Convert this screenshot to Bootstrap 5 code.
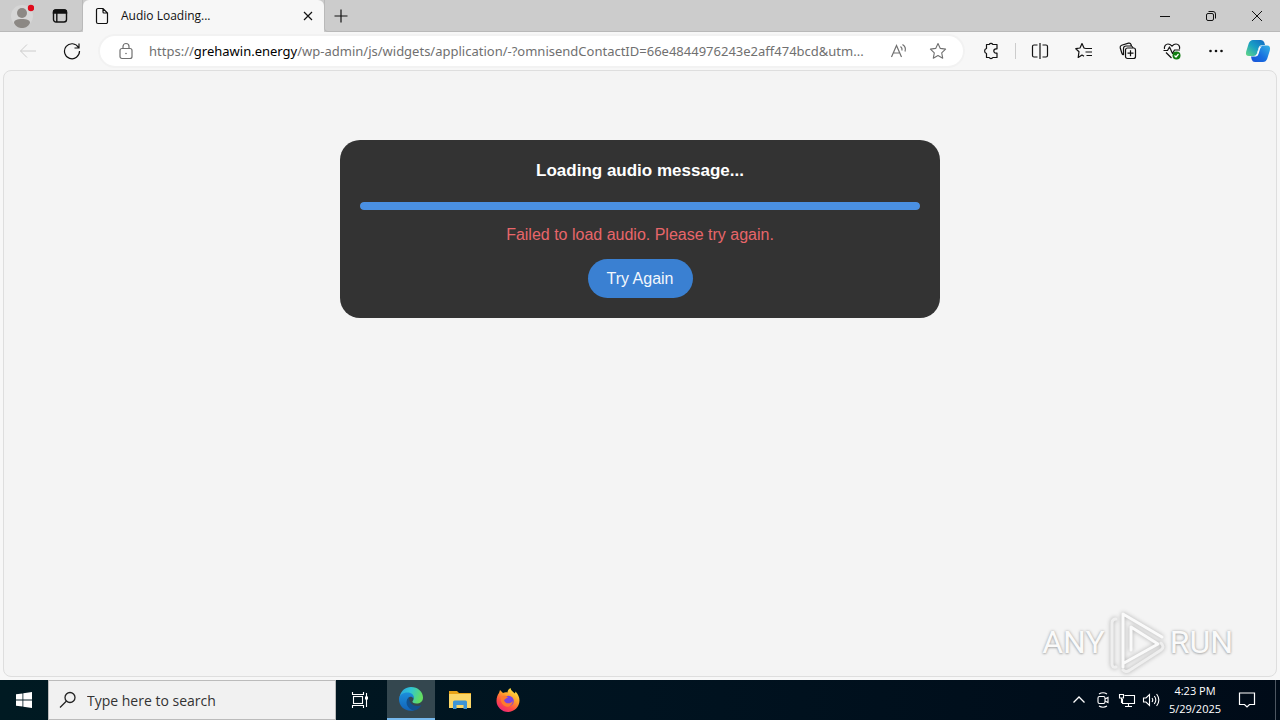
<!DOCTYPE html>
<html lang="en">
<head>
<meta charset="utf-8">
<meta name="viewport" content="width=device-width, initial-scale=1">
<title>Audio Loading...</title>
<link href="https://cdn.jsdelivr.net/npm/bootstrap@5.3.0/dist/css/bootstrap.min.css" rel="stylesheet">
<style>
  body { font-family: "Open Sans", "Noto Sans", sans-serif; font-size: 12px; background: #f7f7f7; color: #111; }
  svg { display: block; fill: none; stroke: currentColor; flex: none; }
  svg.solid { stroke: none; }
  .plain { border: 0; background: transparent; color: inherit; padding: 0; display: flex; align-items: center; justify-content: center; flex: none; }
  .titlebar { height: 32px; background: #ccc; }
  .leading { width: 83px; border-right: 1px solid #b9b9b9; border-bottom: 1px solid #b9b9b9; border-bottom-right-radius: 4px; padding-left: 3px; }
  .w-38 { width: 38px; }
  .browser-tab { width: 241px; background: #f7f7f7; border-radius: 6px 6px 0 0; padding: 0 8px 0 12px; }
  .tab-tail { border-left: 1px solid #b9b9b9; border-bottom: 1px solid #b9b9b9; border-bottom-left-radius: 4px; }
  .w-34 { width: 32px; }
  .w-46 { width: 46px; }
  .toolbar { height: 38px; padding: 0 2px 0 6px; }
  .tool { width: 44px; height: 32px; }
  .omnibox { height: 30px; background: #fff; border-radius: 15px; margin: 0 6px; padding-left: 18px; padding-right: 6px; box-shadow: 0 0 0 2px #f2f2f2; color: #707070; font-family: "Noto Sans", sans-serif; font-size: 13px; }
  .omnibox b { font-weight: 400; color: #000; }
  .address { margin-left: 15px; padding-top: 1px; white-space: nowrap; outline: 0; }
  .omni-btn { width: 39px; height: 28px; }
  .divider { width: 1px; height: 16px; background: #ccc; margin: 0 2px; }
  .site { margin: 0 3px 3px; background: #f4f4f4; border: 1px solid #dedede; border-radius: 8px; padding: 69px 16px 16px; }
  .player { max-width: 600px; background: #333; border-radius: 20px; padding: 20px; font-family: "Liberation Sans", Arial, sans-serif; font-size: 16px; line-height: 18px; }
  .player h1 { font-size: 17px; line-height: 22px; font-weight: 700; color: #fff; margin: 0 0 20px; }
  .player .progress { height: 8px; border-radius: 4px; background: #555; margin-bottom: 16px; }
  .player .progress-bar { background: #4a90e2; border-radius: 4px; }
  .player p { color: #e8666a; margin: 0 0 15px; }
  .retry { background: #3a80d2; color: #f2f7fc; border: 0; border-radius: 20px; padding: 10px 19px; height: 39px; font-size: 16px; line-height: 19px; }
  .watermark { right: 43px; bottom: 2px; font-family: Roboto, "Liberation Sans", sans-serif; font-size: 32px; line-height: 64px; color: #fafafa; text-shadow: 0 0 3px #a8a8a8, 0 1px 2px #bdbdbd; pointer-events: none; }
  .watermark svg { filter: drop-shadow(0 0 2px #aaa); margin: 0 4px 0 3px; }
  .taskbar { height: 40px; background: linear-gradient(90deg, #001a22, #001320 50%, #000b18); color: #fff; }
  .w-48 { width: 48px; }
  .search { width: 288px; background: #f1f1f1; border: 1px solid #bbb; color: #222; padding-left: 10px; gap: 10px; }
  .search input { border: 0; background: transparent; outline: 0; padding: 0; min-width: 0; font-size: 14px; color: #333; }
  .search input::placeholder { color: #333; opacity: 1; }
  .running { background: #34474f; border-bottom: 2px solid #76b9ed; margin: 0 1px 0 3px; }
  .w-24 { width: 24px; }
  .clock { width: 64px; font-size: 11px; line-height: 18px; }
  .w-40 { width: 40px; }
  .peek { width: 5px; border-left: 1px solid #4d5661; margin-left: 8px; }
</style>
</head>
<body class="vh-100 d-flex flex-column overflow-hidden">
<header>
  <div class="titlebar d-flex">
    <div class="leading d-flex">
      <button class="plain w-38" aria-label="Profile"><svg class="solid" width="24" height="26" viewBox="0 0 24 26"><circle cx="12" cy="13" r="11" fill="#d6d6d6"/><circle cx="12" cy="10" r="5" fill="#8c8884"/><path d="M4 20c0-3 3-4 8-4s8 1 8 4c-2 4-5 5-8 5s-6-1-8-5z" fill="#8c8884"/><circle cx="21" cy="5" r="3.2" fill="#e00b1c"/></svg></button>
      <button class="plain w-38" aria-label="Tab actions"><svg width="16" height="16" viewBox="0 0 16 16" stroke-width="1.4"><rect x="1.5" y="2" width="13" height="12" rx="2.5"/><path d="M1.5 5V4a2 2 0 0 1 2-2h9a2 2 0 0 1 2 2v1z" fill="currentColor"/><path d="M4.8 5v9"/></svg></button>
    </div>
    <div class="browser-tab d-flex align-items-center">
      <svg width="14" height="18" viewBox="0 0 14 18" stroke-width="1.2"><path d="M3 1.5h5L12.500 6v9a1.500 1.500 0 0 1-1.500 1.500H3A1.500 1.500 0 0 1 1.500 15V3A1.500 1.500 0 0 1 3 1.500zM8 1.500V5a1 1 0 0 0 1 1h3.500"/></svg>
      <span class="flex-grow-1 ms-2 ps-1">Audio Loading...</span>
      <button class="plain" aria-label="Close tab"><svg width="16" height="16" viewBox="0 0 16 16" stroke-width="1.200"><path d="M4 4l8 8M12 4l-8 8"/></svg></button>
    </div>
    <div class="tab-tail d-flex flex-grow-1 justify-content-between">
      <button class="plain w-34" aria-label="New tab"><svg width="16" height="16" viewBox="0 0 16 16" stroke-width="1.200"><path d="M8 1.500v13M1.500 8h13"/></svg></button>
      <div class="d-flex">
        <button class="plain w-46" aria-label="Minimize"><svg width="12" height="12" viewBox="0 0 12 12"><path d="M1 6.500h10"/></svg></button>
        <button class="plain w-46" aria-label="Restore"><svg width="12" height="12" viewBox="0 0 12 12"><rect x="1.500" y="3.500" width="7" height="7" rx="1.500"/><path d="M3.500 1.500H8A2.500 2.500 0 0 1 10.500 4v4.500"/></svg></button>
        <button class="plain w-46" aria-label="Close"><svg width="12" height="12" viewBox="0 0 12 12"><path d="M1 1l10 10M11 1L1 11"/></svg></button>
      </div>
    </div>
  </div>
  <nav class="toolbar d-flex align-items-center">
    <button class="plain tool" aria-label="Back"><svg width="18" height="16" viewBox="0 0 18 16" style="color:#ccc"><path d="M17 8H1.500M8 1.500L1.500 8 8 14.500"/></svg></button>
    <button class="plain tool" aria-label="Refresh"><svg width="18" height="18" viewBox="0 0 18 18" stroke-width="1.200"><path d="M15.500 5.500A7.500 7.500 0 1 0 16.500 9M16 1.500V6h-4.500"/></svg></button>
    <div class="omnibox d-flex align-items-center flex-grow-1 overflow-hidden">
      <svg width="16" height="18" viewBox="0 0 16 18" stroke-width="1.200"><rect x="2" y="6.500" width="12" height="10" rx="2"/><path d="M5 6.500V4.500a3 3 0 0 1 6 0v2"/><circle cx="8" cy="11.500" r=".8" fill="currentColor" stroke="none"/></svg>
      <div class="address flex-grow-1" role="textbox" contenteditable="true" aria-label="Address and search bar" spellcheck="false">https://<b>grehawin.energy</b>/wp-admin/js/widgets/application/-?omnisendContactID=66e4844976243e2aff474bcd&amp;utm...</div>
      <button class="plain omni-btn" aria-label="Read aloud"><svg width="18" height="16" viewBox="0 0 18 16" stroke-width="1.200"><path d="M1.500 14L6.500 2.500 11.500 14M3.500 10h6M10.500 3.500q2 1.500 1.500 4M12.500 1.500q4 2.500 2.500 7"/></svg></button>
      <button class="plain omni-btn" aria-label="Add to favorites"><svg width="18" height="18" viewBox="0 0 18 18" stroke-width="1.100" stroke-linejoin="round"><path d="M9 1.500l2.300 4.900 5.300.7-3.900 3.700 1 5.400L9 13.600l-4.700 2.600 1-5.400L1.400 7.100l5.300-.7z"/></svg></button>
    </div>
    <button class="plain tool" aria-label="Extensions"><svg width="18" height="18" viewBox="0 0 18 18" stroke-width="1.200" stroke-linejoin="round"><path d="M4.500 2.500h2.700a2 2 0 0 1 3.600 0H15v4.300h-1a2.200 2.200 0 0 0 0 4.400h1v4.300h-4.200a2 2 0 0 1-3.600 0H4.500v-4a2.600 2.600 0 0 1 0-5z"/></svg></button>
    <span class="divider"></span>
    <button class="plain tool" aria-label="Split screen"><svg width="18" height="18" viewBox="0 0 18 18" stroke-width="1.200"><path d="M9 1v16M6.500 3H3a1.500 1.500 0 0 0-1.500 1.500v9A1.500 1.500 0 0 0 3 15h3.500M11.500 3H15a1.500 1.500 0 0 1 1.500 1.500v9A1.500 1.500 0 0 1 15 15h-3.500"/></svg></button>
    <button class="plain tool" aria-label="Favorites"><svg width="18" height="18" viewBox="0 0 18 18" stroke-width="1.200" stroke-linejoin="round"><path d="M10.500 6.500L9 6 7 1.500 5 6l-4.200.7 3.200 3-.8 5.800L7 13l2 1.200M10.500 6.500h6.500M10.500 10h6.500M11.500 13.500h5.500"/></svg></button>
    <button class="plain tool" aria-label="Collections"><svg width="18" height="18" viewBox="0 0 18 18" stroke-width="1.200"><rect x="6.500" y="6" width="10" height="10.500" rx="2"/><path d="M11.500 8.200v6M8.500 11.200h6M4.500 13q-1.300-.5-1.700-2L1.200 5.800q-.4-2 1.400-2.600L9.500 1.200q2-.4 2.600 1.400l.4 1.400M14 6q-.3-2-2.300-2H7Q4.500 4 4.500 6.500V13"/></svg></button>
    <button class="plain tool" aria-label="Browser essentials"><svg width="18" height="18" viewBox="0 0 18 18" stroke-width="1.200" stroke-linejoin="round"><path d="M1.500 7C.8 4 3 2 5 2c2 0 3 1 4 2.200C10 3 11 2 13 2c2.300 0 4.300 2 3.500 5M.5 8.500h4L6.500 5l3 6.500 2-3.500h5.500M3 10.500l5.500 5.500"/><circle cx="13.500" cy="13.500" r="4" fill="#107c10" stroke="none"/><path d="M11.500 13.500l1.500 1.500 2.500-3" stroke="#fff"/></svg></button>
    <button class="plain tool" aria-label="Settings and more"><svg class="solid" width="16" height="16" viewBox="0 0 16 16"><g fill="#111"><circle cx="2.500" cy="8" r="1.300"/><circle cx="8" cy="8" r="1.300"/><circle cx="13.500" cy="8" r="1.300"/></g></svg></button>
    <button class="plain w-40" aria-label="Copilot"><svg class="solid" width="26" height="24" viewBox="0 0 26 24"><defs><linearGradient id="ca" x1="1" y1="0" x2="0" y2="1"><stop offset="0" stop-color="#1267c4"/><stop offset=".5" stop-color="#189fc4"/><stop offset="1" stop-color="#65d983"/></linearGradient><linearGradient id="cb" x1="1" y1="0" x2="0" y2="1"><stop offset="0" stop-color="#34b4e5"/><stop offset=".55" stop-color="#176fe0"/><stop offset="1" stop-color="#1a50d8"/></linearGradient></defs><path d="M8 1h8q2.500 0 3.300 2.500L20 6h-3q-2.500 0-3.300 2.500l-2 6.500Q11 17 8.500 17H4Q0 17 1.200 12.500l2.500-8Q5 1 8 1z" fill="url(#ca)"/><path d="M18 23h-8q-2.500 0-3.300-2.500L6 17.500h3q2.500 0 3.300-2.500l2-6.500Q15 6.500 17.500 6.500H22q4 0 2.800 5l-2.500 8Q21 23 18 23z" fill="url(#cb)"/><path d="M14.500 7.500h2.500q-1.500.8-2 2.500l-1.500 5q-.8 2.500-3 2.500H9q2.300-.5 3-2.500z" fill="#fff"/></svg></button>
  </nav>
</header>

<main class="site position-relative flex-grow-1">
  <section class="player mx-auto text-center">
    <h1>Loading audio message...</h1>
    <div class="progress" role="progressbar" aria-label="Loading audio" aria-valuenow="100" aria-valuemin="0" aria-valuemax="100"><div class="progress-bar w-100"></div></div>
    <p>Failed to load audio. Please try again.</p>
    <button class="retry" type="button">Try Again</button>
  </section>
  <div class="watermark position-absolute d-flex align-items-center">
    <span>ANY</span>
    <svg width="58" height="64" viewBox="0 0 58 64" stroke-width="3" stroke-linejoin="round" stroke-linecap="round"><path d="M15 57V4l39 23M23 40V17l27 17-34 19"/><path d="M8 9q-4 0-4 4v41q0 4 4 3M15 60q3 3 7 0l31-20q4-3 0-7" stroke="#efefef"/></svg>
    <span>RUN</span>
  </div>
</main>

<footer class="taskbar d-flex">
  <button class="plain w-48" aria-label="Start"><svg class="solid" width="16" height="16" viewBox="0 0 16 16"><path fill="#fff" d="M0 2.300l6.500-.9v6.200H0zM7.300 1.300L16 0v7.600H7.300zM0 8.400h6.500v6.200L0 13.700zM7.300 8.400H16V16l-8.700-1.200z"/></svg></button>
  <label class="search d-flex align-items-center">
    <svg width="18" height="18" viewBox="0 0 18 18" stroke-width="1.300"><circle cx="11" cy="6.500" r="5"/><path d="M7.500 10L1 16.500"/></svg>
    <input class="flex-grow-1" type="text" placeholder="Type here to search" aria-label="Type here to search">
  </label>
  <button class="plain w-48" aria-label="Task view"><svg width="18" height="18" viewBox="0 0 18 18" stroke-width="1.100"><rect x="2.500" y="5.500" width="9" height="7"/><path d="M1.500 1v2.500h11V1M1.500 17v-2.500h11V17M15.500 2v14"/><path d="M14 5.500h3v3h-3z" fill="currentColor" stroke="none"/></svg></button>
  <button class="plain w-48 running" aria-label="Microsoft Edge"><svg class="solid" width="24" height="24" viewBox="0 0 24 24"><defs><linearGradient id="ea" x1="0" y1="0" x2="1" y2=".3"><stop offset="0" stop-color="#2a9fe2"/><stop offset=".5" stop-color="#30c6d2"/><stop offset="1" stop-color="#62dd62"/></linearGradient><linearGradient id="eb" x1="0" y1="0" x2="0" y2="1"><stop offset="0" stop-color="#1c8edb"/><stop offset="1" stop-color="#1263b8"/></linearGradient></defs><path d="M.5 10C2 3.500 6.500 0 12 0c7 0 12 5 12 10.500 0 4-3 6-6.500 6-3 0-4.500-1.200-4-2.200 2.500-2.500 1-7-4-7C5 7.300 1.500 9 .5 10z" fill="url(#ea)"/><path d="M0 12c0-4 4-6.500 8.500-6.500 5 0 7 3.500 6 6-1-1.500-2.500-2-4-1.500-4 1.500-3.500 11 5 13.200C7 25.500 0 20 0 12z" fill="url(#eb)"/><path d="M10 10.200c-5 4-2 12 5 13.200 3-.4 6-2.500 7.500-5.500-5 2.500-12.500.5-12.500-7.700z" fill="#12518f"/></svg></button>
  <button class="plain w-48" aria-label="File Explorer"><svg class="solid" width="22" height="20" viewBox="0 0 22 20"><path d="M0 1h8l2 2h12v4H0z" fill="#e8a317"/><path d="M0 4h22v14H0z" fill="#fbd667"/><path d="M4 19v-7q0-1.500 1.500-1.500h11q1.500 0 1.500 1.500v7h-3.500v-4h-7v4z" fill="#3d94d6"/></svg></button>
  <button class="plain w-48" aria-label="Firefox"><svg class="solid" width="24" height="24" viewBox="0 0 24 24"><defs><linearGradient id="fa" x1=".8" y1="0" x2=".2" y2="1"><stop offset="0" stop-color="#fff044"/><stop offset=".4" stop-color="#ff9b2b"/><stop offset=".7" stop-color="#ff4a45"/><stop offset="1" stop-color="#e8217f"/></linearGradient></defs><path d="M3 5l1-3 3 3c1.500-.7 3-.8 4.500-.5C11.500 2.500 13 1 14.500 0c.5 3 3 4 4.500 5.500l.5-2C22 6 23.500 9 23.500 12.500 23.500 19 18 24 12 24S.5 19 .5 13C.5 9.500 1.500 7 3 5z" fill="url(#fa)"/><circle cx="12.500" cy="13" r="5.300" fill="#7a44e0"/><path d="M5 9c3-2 5-1.500 7 .5-2 .3-2 1.500-4 2.500 1 4 6 4.500 9 1-1 5-4 6.500-7 5.500C6 17.500 4 13 5 9z" fill="#ff7a2d"/></svg></button>
  <div class="d-flex ms-auto">
    <button class="plain w-24" aria-label="Show hidden icons"><svg width="14" height="14" viewBox="0 0 14 14" stroke-width="1.300"><path d="M1.500 9.500L7 4l5.500 5.500"/></svg></button>
    <button class="plain w-24" aria-label="Meet now"><svg width="14" height="18" viewBox="0 0 14 18" stroke-width="1.100"><rect x="2" y="5.500" width="7" height="7" rx="1.500"/><path d="M9 8l3-1.500v5L9 10M3 3q4-2.500 8 0M3 15q4 2.500 8 0"/></svg></button>
    <button class="plain w-24" aria-label="Network"><svg width="18" height="18" viewBox="0 0 18 18" stroke-width="1.100"><path d="M6.500 4.500h10v8H4.500V8M10.500 12.500v3M7 15.500h7"/><path d="M1.500 3.500h4V7h-4zM3.500 7v5"/></svg></button>
    <button class="plain w-24" aria-label="Volume"><svg width="18" height="16" viewBox="0 0 18 16" stroke-width="1.100"><path d="M1.500 6H4l3.500-3.500v11L4 10H1.500zM10 6q1.500 2 0 4M12.300 4q3 4 0 8M14.600 2q4.500 6 0 12"/></svg></button>
    <div class="clock text-center align-self-center text-nowrap"><div>4:23 PM</div><div>5/29/2025</div></div>
    <button class="plain w-40" aria-label="Notifications"><svg width="18" height="18" viewBox="0 0 18 18" stroke-width="1.200"><path d="M1.500 2h15v11.500h-5L9 16l-2.500-2.500h-5z"/></svg></button>
    <span class="peek"></span>
  </div>
</footer>
<script src="https://cdn.jsdelivr.net/npm/bootstrap@5.3.0/dist/js/bootstrap.bundle.min.js"></script>
</body>
</html>
